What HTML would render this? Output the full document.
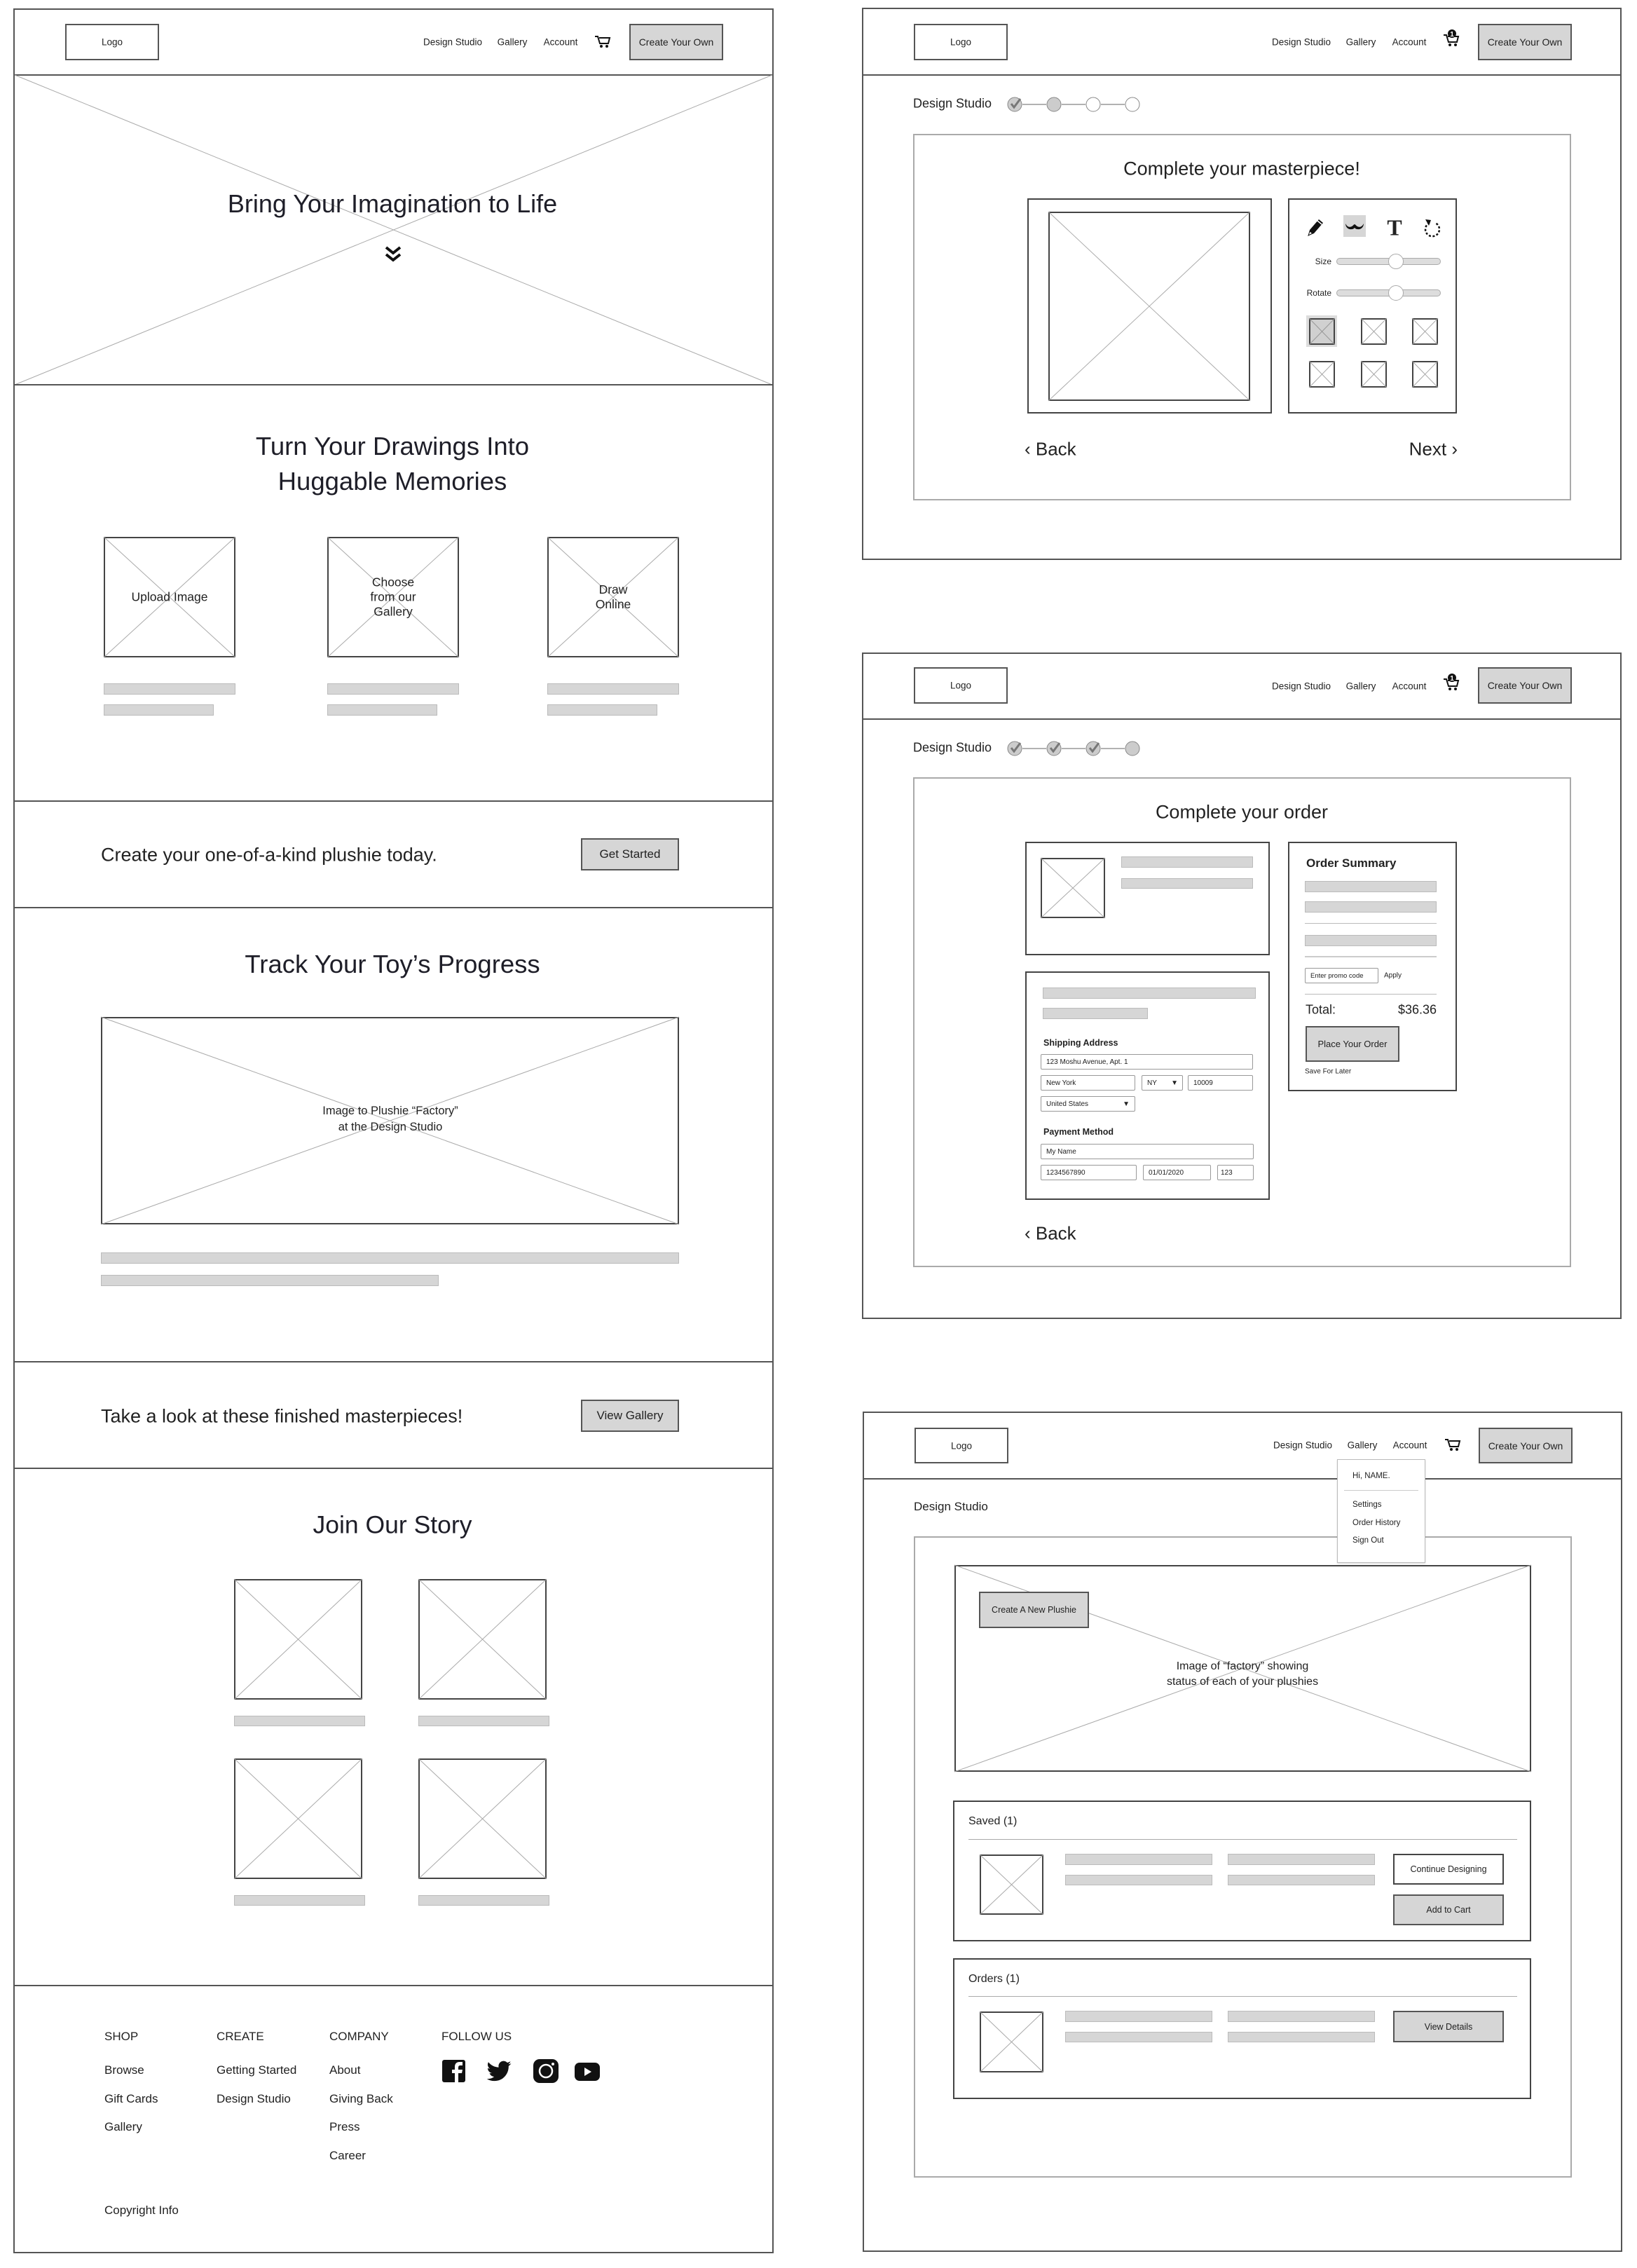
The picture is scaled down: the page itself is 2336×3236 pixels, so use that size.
<!DOCTYPE html>
<html><head><meta charset="utf-8">
<style>
*{margin:0;padding:0;box-sizing:border-box}
body{width:2336px;height:3236px;background:#fff;position:relative;overflow:hidden;font-family:"Liberation Sans",Arial,sans-serif;color:#222}
.a{position:absolute}
.fr{position:absolute;border:2px solid #555}
.hl{position:absolute;height:2px;background:#555}
.t{position:absolute;white-space:nowrap}
.c{transform:translate(-50%,-50%);text-align:center}
.l{transform:translateY(-50%)}
.r{transform:translate(-100%,-50%)}
.box{position:absolute;border:2px solid #444;background:#fff}
.bar{position:absolute;background:#d6d6d6;border:1px solid #bbb}
.btn{position:absolute;background:#d6d6d6;border:2px solid #555;display:flex;align-items:center;justify-content:center;white-space:nowrap}
.wbtn{position:absolute;background:#fff;border:2px solid #444;display:flex;align-items:center;justify-content:center;white-space:nowrap}
.inp{position:absolute;border:1px solid #999;border-radius:2px;font-size:10px;padding-left:7px;display:flex;align-items:center;background:#fff}
svg.x{position:absolute;overflow:visible}
.nav{font-size:13.5px}
</style></head><body>

<!-- ============ LEFT FRAME ============ -->
<div class="fr" style="left:19px;top:12px;width:1085px;height:3203px"></div>
<div class="hl" style="left:19px;top:106px;width:1085px"></div>
<div class="box" style="left:93px;top:34px;width:134px;height:52px;border-color:#555"></div>
<div class="t c" style="left:160px;top:60px;font-size:13.5px">Logo</div>
<div class="t c nav" style="left:646px;top:60px">Design Studio</div>
<div class="t c nav" style="left:731px;top:60px">Gallery</div>
<div class="t c nav" style="left:800px;top:60px">Account</div>
<svg class="a" style="left:848px;top:50px" width="24" height="20" viewBox="0 0 24 20"><path d="M1 2h4l3 10h12l2-8H7" fill="none" stroke="#111" stroke-width="2"/><circle cx="10" cy="16" r="2" fill="#111"/><circle cx="18" cy="16" r="2" fill="#111"/></svg>
<div class="btn" style="left:898px;top:34px;width:134px;height:52px;font-size:14px">Create Your Own</div>

<!-- hero -->
<svg class="x" style="left:21px;top:107px" width="1081" height="442"><line x1="0" y1="0" x2="1081" y2="442" stroke="#aaa" stroke-width="1"/><line x1="1081" y1="0" x2="0" y2="442" stroke="#aaa" stroke-width="1"/></svg>
<div class="t c" style="left:560px;top:291px;font-size:36px;color:#1e1e28">Bring Your Imagination to Life</div>
<svg class="a" style="left:548px;top:350px" width="26" height="26" viewBox="0 0 26 26"><path d="M3 3l10 8 10-8M3 13l10 8 10-8" fill="none" stroke="#111" stroke-width="4"/></svg>
<div class="hl" style="left:19px;top:548px;width:1085px"></div>

<!-- turn your drawings -->
<div class="t c" style="left:560px;top:662px;font-size:36.5px;line-height:50px;color:#1e1e28">Turn Your Drawings Into<br>Huggable Memories</div>
<svg class="x" style="left:148px;top:766px" width="188" height="172"><rect x="1" y="1" width="186" height="170" fill="#fff" stroke="#444" stroke-width="2"/><line x1="0" y1="0" x2="188" y2="172" stroke="#aaa"/><line x1="188" y1="0" x2="0" y2="172" stroke="#aaa"/></svg>
<svg class="x" style="left:467px;top:766px" width="188" height="172"><rect x="1" y="1" width="186" height="170" fill="#fff" stroke="#444" stroke-width="2"/><line x1="0" y1="0" x2="188" y2="172" stroke="#aaa"/><line x1="188" y1="0" x2="0" y2="172" stroke="#aaa"/></svg>
<svg class="x" style="left:781px;top:766px" width="188" height="172"><rect x="1" y="1" width="186" height="170" fill="#fff" stroke="#444" stroke-width="2"/><line x1="0" y1="0" x2="188" y2="172" stroke="#aaa"/><line x1="188" y1="0" x2="0" y2="172" stroke="#aaa"/></svg>
<div class="t c" style="left:242px;top:852px;font-size:17.5px">Upload Image</div>
<div class="t c" style="left:561px;top:852px;font-size:17.5px;line-height:21px">Choose<br>from our<br>Gallery</div>
<div class="t c" style="left:875px;top:852px;font-size:17.5px;line-height:21px">Draw<br>Online</div>
<div class="bar" style="left:148px;top:975px;width:188px;height:16px"></div>
<div class="bar" style="left:148px;top:1005px;width:157px;height:16px"></div>
<div class="bar" style="left:467px;top:975px;width:188px;height:16px"></div>
<div class="bar" style="left:467px;top:1005px;width:157px;height:16px"></div>
<div class="bar" style="left:781px;top:975px;width:188px;height:16px"></div>
<div class="bar" style="left:781px;top:1005px;width:157px;height:16px"></div>
<div class="hl" style="left:19px;top:1142px;width:1085px"></div>

<!-- CTA 1 -->
<div class="t l" style="left:144px;top:1220px;font-size:27px">Create your one-of-a-kind plushie today.</div>
<div class="btn" style="left:829px;top:1196px;width:140px;height:46px;font-size:17px">Get Started</div>
<div class="hl" style="left:19px;top:1294px;width:1085px"></div>

<!-- track -->
<div class="t c" style="left:560px;top:1376px;font-size:36.5px;color:#1e1e28">Track Your Toy’s Progress</div>
<svg class="x" style="left:144px;top:1451px" width="825" height="296"><rect x="1" y="1" width="823" height="294" fill="#fff" stroke="#444" stroke-width="2"/><line x1="0" y1="0" x2="825" y2="296" stroke="#aaa"/><line x1="825" y1="0" x2="0" y2="296" stroke="#aaa"/></svg>
<div class="t c" style="left:557px;top:1597px;font-size:16.5px;line-height:23px">Image to Plushie “Factory”<br>at the Design Studio</div>
<div class="bar" style="left:144px;top:1787px;width:825px;height:16px"></div>
<div class="bar" style="left:144px;top:1819px;width:482px;height:16px"></div>
<div class="hl" style="left:19px;top:1942px;width:1085px"></div>

<!-- CTA 2 -->
<div class="t l" style="left:144px;top:2021px;font-size:27px">Take a look at these finished masterpieces!</div>
<div class="btn" style="left:829px;top:1997px;width:140px;height:46px;font-size:17px">View Gallery</div>
<div class="hl" style="left:19px;top:2094px;width:1085px"></div>

<!-- join -->
<div class="t c" style="left:560px;top:2176px;font-size:35.5px;color:#1e1e28">Join Our Story</div>
<svg class="x" style="left:334px;top:2253px" width="183" height="172"><rect x="1" y="1" width="181" height="170" fill="#fff" stroke="#444" stroke-width="2"/><line x1="0" y1="0" x2="183" y2="172" stroke="#aaa"/><line x1="183" y1="0" x2="0" y2="172" stroke="#aaa"/></svg>
<svg class="x" style="left:597px;top:2253px" width="183" height="172"><rect x="1" y="1" width="181" height="170" fill="#fff" stroke="#444" stroke-width="2"/><line x1="0" y1="0" x2="183" y2="172" stroke="#aaa"/><line x1="183" y1="0" x2="0" y2="172" stroke="#aaa"/></svg>
<svg class="x" style="left:334px;top:2509px" width="183" height="172"><rect x="1" y="1" width="181" height="170" fill="#fff" stroke="#444" stroke-width="2"/><line x1="0" y1="0" x2="183" y2="172" stroke="#aaa"/><line x1="183" y1="0" x2="0" y2="172" stroke="#aaa"/></svg>
<svg class="x" style="left:597px;top:2509px" width="183" height="172"><rect x="1" y="1" width="181" height="170" fill="#fff" stroke="#444" stroke-width="2"/><line x1="0" y1="0" x2="183" y2="172" stroke="#aaa"/><line x1="183" y1="0" x2="0" y2="172" stroke="#aaa"/></svg>
<div class="bar" style="left:334px;top:2448px;width:187px;height:15px"></div>
<div class="bar" style="left:597px;top:2448px;width:187px;height:15px"></div>
<div class="bar" style="left:334px;top:2704px;width:187px;height:15px"></div>
<div class="bar" style="left:597px;top:2704px;width:187px;height:15px"></div>
<div class="hl" style="left:19px;top:2832px;width:1085px"></div>

<!-- footer -->
<div class="t l" style="left:149px;top:2906px;font-size:17px">SHOP</div>
<div class="t l" style="left:309px;top:2906px;font-size:17px">CREATE</div>
<div class="t l" style="left:470px;top:2906px;font-size:17px">COMPANY</div>
<div class="t l" style="left:630px;top:2906px;font-size:17px">FOLLOW US</div>
<div class="t l" style="left:149px;top:2954px;font-size:17px">Browse</div>
<div class="t l" style="left:149px;top:2995px;font-size:17px">Gift Cards</div>
<div class="t l" style="left:149px;top:3035px;font-size:17px">Gallery</div>
<div class="t l" style="left:309px;top:2954px;font-size:17px">Getting Started</div>
<div class="t l" style="left:309px;top:2995px;font-size:17px">Design Studio</div>
<div class="t l" style="left:470px;top:2954px;font-size:17px">About</div>
<div class="t l" style="left:470px;top:2995px;font-size:17px">Giving Back</div>
<div class="t l" style="left:470px;top:3035px;font-size:17px">Press</div>
<div class="t l" style="left:470px;top:3076px;font-size:17px">Career</div>
<div class="t l" style="left:149px;top:3154px;font-size:17px">Copyright Info</div>
<svg class="a" style="left:630px;top:2939px" width="36" height="32" viewBox="0 0 36 32"><rect x="1" y="0" width="33" height="32" rx="3" fill="#111"/><path d="M24 32V19h5l1-5h-6v-3c0-2 1-3 3-3h3V3h-4c-5 0-7 3-7 7v4h-4v5h4v13z" fill="#fff"/></svg>
<svg class="a" style="left:693px;top:2940px" width="38" height="32" viewBox="0 0 24 20"><path d="M23 2.5c-.8.4-1.7.6-2.6.7.9-.6 1.6-1.4 2-2.5-.9.5-1.900.9-2.9 1.1A4.5 4.5 0 0 0 11.8 6 12.8 12.8 0 0 1 2.5 1.3a4.5 4.5 0 0 0 1.4 6 4.4 4.4 0 0 1-2-.6v.1c0 2.2 1.5 4 3.6 4.4-.7.2-1.4.2-2 .1.6 1.8 2.200 3.1 4.2 3.1A9 9 0 0 1 1 16.3 12.8 12.8 0 0 0 7.9 18.3c8.3 0 12.8-6.9 12.8-12.800v-.6c.9-.6 1.6-1.4 2.3-2.4z" fill="#111"/></svg>
<svg class="a" style="left:761px;top:2938px" width="36" height="34" viewBox="0 0 36 34"><rect x="0" y="0" width="36" height="34" rx="9" fill="#111"/><circle cx="18" cy="17" r="9" fill="none" stroke="#fff" stroke-width="2.5"/><circle cx="28" cy="7" r="2" fill="#fff"/></svg>
<svg class="a" style="left:820px;top:2943px" width="36" height="26" viewBox="0 0 36 26"><rect x="0" y="0" width="36" height="26" rx="7" fill="#111"/><path d="M14 7v12l10-6z" fill="#fff"/></svg>

<!-- ============ RIGHT FRAME 1 ============ -->
<div class="fr" style="left:1230px;top:11px;width:1084px;height:788px"></div>
<div class="hl" style="left:1230px;top:106px;width:1084px"></div>
<div class="box" style="left:1304px;top:34px;width:134px;height:52px;border-color:#555"></div>
<div class="t c" style="left:1371px;top:60px;font-size:13.5px">Logo</div>
<div class="t c nav" style="left:1857px;top:60px">Design Studio</div>
<div class="t c nav" style="left:1942px;top:60px">Gallery</div>
<div class="t c nav" style="left:2011px;top:60px">Account</div>
<svg class="a" style="left:2059px;top:42px" width="24" height="26" viewBox="0 0 24 26"><path d="M1 8h4l3 10h12l2-8H7" fill="none" stroke="#111" stroke-width="2"/><circle cx="10" cy="22" r="2" fill="#111"/><circle cx="18" cy="22" r="2" fill="#111"/><circle cx="13" cy="6" r="6" fill="#111"/><text x="13" y="10" font-size="10" fill="#fff" text-anchor="middle" font-family="Liberation Sans" font-weight="bold">1</text></svg>
<div class="btn" style="left:2109px;top:34px;width:134px;height:52px;font-size:14px">Create Your Own</div>

<div class="t l" style="left:1303px;top:148px;font-size:18px">Design Studio</div>
<svg class="a" style="left:1436px;top:136px" width="195" height="26" viewBox="0 0 195 26">
<line x1="23" y1="13" x2="57" y2="13" stroke="#666"/><line x1="79" y1="13" x2="113" y2="13" stroke="#666"/><line x1="135" y1="13" x2="169" y2="13" stroke="#666"/>
<circle cx="12" cy="13" r="10" fill="#ccc" stroke="#888"/><path d="M7 12l4 5 9-12" fill="none" stroke="#777" stroke-width="3"/>
<circle cx="68" cy="13" r="10" fill="#ccc" stroke="#888"/>
<circle cx="124" cy="13" r="10" fill="#fff" stroke="#888"/>
<circle cx="180" cy="13" r="10" fill="#fff" stroke="#888"/></svg>

<div class="a" style="left:1303px;top:191px;width:939px;height:523px;border:2px solid #aaa"></div>
<div class="t c" style="left:1772px;top:241px;font-size:27px">Complete your masterpiece!</div>
<div class="box" style="left:1466px;top:283px;width:349px;height:307px"></div>
<svg class="x" style="left:1496px;top:302px" width="288" height="270"><rect x="1" y="1" width="286" height="268" fill="#fff" stroke="#444" stroke-width="2"/><line x1="0" y1="0" x2="288" y2="270" stroke="#aaa"/><line x1="288" y1="0" x2="0" y2="270" stroke="#aaa"/></svg>
<div class="box" style="left:1838px;top:283px;width:241px;height:307px"></div>
<svg class="a" style="left:1864px;top:309px" width="26" height="30" viewBox="0 0 26 30"><path d="M3 27l2-8L18 4l6 5L11 24z" fill="#111"/><path d="M3 27l2-6 4 3z" fill="#fff" stroke="#111"/><line x1="16" y1="6" x2="22" y2="11" stroke="#fff" stroke-width="1.5"/></svg>
<div class="a" style="left:1917px;top:307px;width:32px;height:31px;background:#d6d6d6"></div>
<svg class="a" style="left:1919px;top:315px" width="28" height="14" viewBox="0 0 28 14"><path d="M1 4c2 4 5 6 9 4 2-1 3-3 4-3s2 2 4 3c4 2 7 0 9-4 0 5-4 9-9 8-2 0-3-1-4-2-1 1-2 2-4 2-5 1-9-3-9-8z" fill="#111"/></svg>
<div class="t c" style="left:1990px;top:325px;font-size:32px;font-weight:bold;font-family:'Liberation Serif',serif">T</div>
<svg class="a" style="left:2030px;top:310px" width="28" height="30" viewBox="0 0 28 30"><path d="M10 8a10 10 0 1 0 8 0" fill="none" stroke="#111" stroke-width="2.5" stroke-dasharray="3 2.5"/><path d="M4 3l8 1-3 8z" fill="#111"/></svg>
<div class="t r" style="left:1900px;top:373px;font-size:12px">Size</div>
<div class="a" style="left:1907px;top:368px;width:149px;height:10px;border:1px solid #aaa;border-radius:5px;background:#ddd"></div>
<div class="a" style="left:1981px;top:362px;width:22px;height:22px;border:1px solid #aaa;border-radius:50%;background:#fff"></div>
<div class="t r" style="left:1900px;top:418px;font-size:12px">Rotate</div>
<div class="a" style="left:1907px;top:413px;width:149px;height:10px;border:1px solid #aaa;border-radius:5px;background:#ddd"></div>
<div class="a" style="left:1981px;top:407px;width:22px;height:22px;border:1px solid #aaa;border-radius:50%;background:#fff"></div>
<div class="a" style="left:1864px;top:450px;width:44px;height:45px;background:#ddd"></div>
<svg class="x" style="left:1868px;top:454px" width="37" height="38"><rect x="1" y="1" width="35" height="36" fill="#d0d0d0" stroke="#444" stroke-width="2"/><line x1="0" y1="0" x2="37" y2="38" stroke="#999"/><line x1="37" y1="0" x2="0" y2="38" stroke="#999"/></svg>
<svg class="x" style="left:1942px;top:454px" width="37" height="38"><rect x="1" y="1" width="35" height="36" fill="#fff" stroke="#444" stroke-width="2"/><line x1="0" y1="0" x2="37" y2="38" stroke="#aaa"/><line x1="37" y1="0" x2="0" y2="38" stroke="#aaa"/></svg>
<svg class="x" style="left:2015px;top:454px" width="37" height="38"><rect x="1" y="1" width="35" height="36" fill="#fff" stroke="#444" stroke-width="2"/><line x1="0" y1="0" x2="37" y2="38" stroke="#aaa"/><line x1="37" y1="0" x2="0" y2="38" stroke="#aaa"/></svg>
<svg class="x" style="left:1868px;top:515px" width="37" height="38"><rect x="1" y="1" width="35" height="36" fill="#fff" stroke="#444" stroke-width="2"/><line x1="0" y1="0" x2="37" y2="38" stroke="#aaa"/><line x1="37" y1="0" x2="0" y2="38" stroke="#aaa"/></svg>
<svg class="x" style="left:1942px;top:515px" width="37" height="38"><rect x="1" y="1" width="35" height="36" fill="#fff" stroke="#444" stroke-width="2"/><line x1="0" y1="0" x2="37" y2="38" stroke="#aaa"/><line x1="37" y1="0" x2="0" y2="38" stroke="#aaa"/></svg>
<svg class="x" style="left:2015px;top:515px" width="37" height="38"><rect x="1" y="1" width="35" height="36" fill="#fff" stroke="#444" stroke-width="2"/><line x1="0" y1="0" x2="37" y2="38" stroke="#aaa"/><line x1="37" y1="0" x2="0" y2="38" stroke="#aaa"/></svg>
<div class="t l" style="left:1462px;top:641px;font-size:26px">‹ Back</div>
<div class="t r" style="left:2080px;top:641px;font-size:26px">Next ›</div>

<!-- ============ RIGHT FRAME 2 ============ -->
<div class="fr" style="left:1230px;top:931px;width:1084px;height:951px"></div>
<div class="hl" style="left:1230px;top:1025px;width:1084px"></div>
<div class="box" style="left:1304px;top:952px;width:134px;height:52px;border-color:#555"></div>
<div class="t c" style="left:1371px;top:978px;font-size:13.5px">Logo</div>
<div class="t c nav" style="left:1857px;top:979px">Design Studio</div>
<div class="t c nav" style="left:1942px;top:979px">Gallery</div>
<div class="t c nav" style="left:2011px;top:979px">Account</div>
<svg class="a" style="left:2059px;top:961px" width="24" height="26" viewBox="0 0 24 26"><path d="M1 8h4l3 10h12l2-8H7" fill="none" stroke="#111" stroke-width="2"/><circle cx="10" cy="22" r="2" fill="#111"/><circle cx="18" cy="22" r="2" fill="#111"/><circle cx="13" cy="6" r="6" fill="#111"/><text x="13" y="10" font-size="10" fill="#fff" text-anchor="middle" font-family="Liberation Sans" font-weight="bold">1</text></svg>
<div class="btn" style="left:2109px;top:952px;width:134px;height:52px;font-size:14px">Create Your Own</div>

<div class="t l" style="left:1303px;top:1067px;font-size:18px">Design Studio</div>
<svg class="a" style="left:1436px;top:1055px" width="195" height="26" viewBox="0 0 195 26">
<line x1="23" y1="13" x2="57" y2="13" stroke="#666"/><line x1="79" y1="13" x2="113" y2="13" stroke="#666"/><line x1="135" y1="13" x2="169" y2="13" stroke="#666"/>
<circle cx="12" cy="13" r="10" fill="#ccc" stroke="#888"/><path d="M7 12l4 5 9-12" fill="none" stroke="#777" stroke-width="3"/>
<circle cx="68" cy="13" r="10" fill="#ccc" stroke="#888"/><path d="M63 12l4 5 9-12" fill="none" stroke="#777" stroke-width="3"/>
<circle cx="124" cy="13" r="10" fill="#ccc" stroke="#888"/><path d="M119 12l4 5 9-12" fill="none" stroke="#777" stroke-width="3"/>
<circle cx="180" cy="13" r="10" fill="#ccc" stroke="#888"/></svg>

<div class="a" style="left:1303px;top:1109px;width:939px;height:699px;border:2px solid #aaa"></div>
<div class="t c" style="left:1772px;top:1159px;font-size:27px">Complete your order</div>
<div class="box" style="left:1463px;top:1201px;width:349px;height:162px"></div>
<svg class="x" style="left:1485px;top:1224px" width="92" height="86"><rect x="1" y="1" width="90" height="84" fill="#fff" stroke="#444" stroke-width="2"/><line x1="0" y1="0" x2="92" y2="86" stroke="#aaa"/><line x1="92" y1="0" x2="0" y2="86" stroke="#aaa"/></svg>
<div class="bar" style="left:1600px;top:1222px;width:188px;height:16px"></div>
<div class="bar" style="left:1600px;top:1253px;width:188px;height:15px"></div>

<div class="box" style="left:1463px;top:1386px;width:349px;height:326px"></div>
<div class="bar" style="left:1488px;top:1409px;width:304px;height:16px"></div>
<div class="bar" style="left:1488px;top:1438px;width:150px;height:16px"></div>
<div class="t l" style="left:1489px;top:1488px;font-size:12.5px;font-weight:bold">Shipping Address</div>
<div class="inp" style="left:1485px;top:1504px;width:303px;height:22px">123 Moshu Avenue, Apt. 1</div>
<div class="inp" style="left:1485px;top:1534px;width:135px;height:22px">New York</div>
<div class="inp" style="left:1629px;top:1534px;width:59px;height:22px">NY<span style="margin-left:auto;margin-right:6px">▼</span></div>
<div class="inp" style="left:1695px;top:1534px;width:93px;height:22px">10009</div>
<div class="inp" style="left:1485px;top:1564px;width:135px;height:22px">United States<span style="margin-left:auto;margin-right:7px">▼</span></div>
<div class="t l" style="left:1489px;top:1615px;font-size:12.5px;font-weight:bold">Payment Method</div>
<div class="inp" style="left:1485px;top:1632px;width:304px;height:22px">My Name</div>
<div class="inp" style="left:1485px;top:1662px;width:137px;height:22px">1234567890</div>
<div class="inp" style="left:1631px;top:1662px;width:97px;height:22px">01/01/2020</div>
<div class="inp" style="left:1737px;top:1662px;width:52px;height:22px;padding-left:4px">123</div>

<div class="box" style="left:1838px;top:1201px;width:241px;height:356px"></div>
<div class="t l" style="left:1864px;top:1232px;font-size:17px;font-weight:bold">Order Summary</div>
<div class="bar" style="left:1862px;top:1257px;width:188px;height:16px"></div>
<div class="bar" style="left:1862px;top:1286px;width:188px;height:16px"></div>
<div class="a" style="left:1862px;top:1317px;width:188px;height:1px;background:#bbb"></div>
<div class="bar" style="left:1862px;top:1334px;width:188px;height:16px"></div>
<div class="a" style="left:1862px;top:1364px;width:188px;height:2px;background:#ccc"></div>
<div class="inp" style="left:1862px;top:1381px;width:105px;height:22px;font-size:9.5px">Enter promo code</div>
<div class="t l" style="left:1975px;top:1392px;font-size:10px">Apply</div>
<div class="a" style="left:1862px;top:1418px;width:188px;height:1px;background:#bbb"></div>
<div class="t l" style="left:1863px;top:1441px;font-size:18px">Total:</div>
<div class="t r" style="left:2050px;top:1441px;font-size:18px">$36.36</div>
<div class="btn" style="left:1863px;top:1464px;width:134px;height:51px;font-size:13px">Place Your Order</div>
<div class="t l" style="left:1862px;top:1529px;font-size:10px">Save For Later</div>
<div class="t l" style="left:1462px;top:1760px;font-size:26px">‹ Back</div>

<!-- ============ RIGHT FRAME 3 ============ -->
<div class="fr" style="left:1231px;top:2014px;width:1084px;height:1199px"></div>
<div class="hl" style="left:1231px;top:2109px;width:1084px"></div>
<div class="box" style="left:1305px;top:2037px;width:134px;height:51px;border-color:#555"></div>
<div class="t c" style="left:1372px;top:2063px;font-size:13.5px">Logo</div>
<div class="t c nav" style="left:1859px;top:2062px">Design Studio</div>
<div class="t c nav" style="left:1944px;top:2062px">Gallery</div>
<div class="t c nav" style="left:2012px;top:2062px">Account</div>
<svg class="a" style="left:2061px;top:2052px" width="24" height="20" viewBox="0 0 24 20"><path d="M1 2h4l3 10h12l2-8H7" fill="none" stroke="#111" stroke-width="2"/><circle cx="10" cy="16" r="2" fill="#111"/><circle cx="18" cy="16" r="2" fill="#111"/></svg>
<div class="btn" style="left:2110px;top:2037px;width:134px;height:51px;font-size:14px">Create Your Own</div>

<div class="t l" style="left:1304px;top:2150px;font-size:17px">Design Studio</div>
<div class="a" style="left:1304px;top:2192px;width:939px;height:915px;border:2px solid #aaa"></div>

<svg class="x" style="left:1362px;top:2233px" width="823" height="295"><rect x="1" y="1" width="821" height="293" fill="#fff" stroke="#444" stroke-width="2"/><line x1="0" y1="0" x2="823" y2="295" stroke="#aaa"/><line x1="823" y1="0" x2="0" y2="295" stroke="#aaa"/></svg>
<div class="btn" style="left:1397px;top:2271px;width:157px;height:52px;font-size:12.5px">Create A New Plushie</div>
<div class="t c" style="left:1773px;top:2389px;font-size:16px;line-height:22px">Image of “factory” showing<br>status of each of your plushies</div>

<div class="box" style="left:1360px;top:2569px;width:825px;height:201px"></div>
<div class="t l" style="left:1382px;top:2599px;font-size:16px">Saved (1)</div>
<div class="a" style="left:1382px;top:2624px;width:783px;height:1px;background:#aaa"></div>
<svg class="x" style="left:1398px;top:2646px" width="91" height="86"><rect x="1" y="1" width="89" height="84" fill="#fff" stroke="#444" stroke-width="2"/><line x1="0" y1="0" x2="91" y2="86" stroke="#aaa"/><line x1="91" y1="0" x2="0" y2="86" stroke="#aaa"/></svg>
<div class="bar" style="left:1520px;top:2645px;width:210px;height:16px"></div>
<div class="bar" style="left:1752px;top:2645px;width:210px;height:16px"></div>
<div class="bar" style="left:1520px;top:2675px;width:210px;height:15px"></div>
<div class="bar" style="left:1752px;top:2675px;width:210px;height:15px"></div>
<div class="wbtn" style="left:1988px;top:2645px;width:158px;height:44px;font-size:12.5px">Continue Designing</div>
<div class="btn" style="left:1988px;top:2703px;width:158px;height:44px;font-size:12.5px">Add to Cart</div>

<div class="box" style="left:1360px;top:2794px;width:825px;height:201px"></div>
<div class="t l" style="left:1382px;top:2824px;font-size:16px">Orders (1)</div>
<div class="a" style="left:1382px;top:2848px;width:783px;height:1px;background:#aaa"></div>
<svg class="x" style="left:1398px;top:2870px" width="91" height="87"><rect x="1" y="1" width="89" height="85" fill="#fff" stroke="#444" stroke-width="2"/><line x1="0" y1="0" x2="91" y2="87" stroke="#aaa"/><line x1="91" y1="0" x2="0" y2="87" stroke="#aaa"/></svg>
<div class="bar" style="left:1520px;top:2869px;width:210px;height:16px"></div>
<div class="bar" style="left:1752px;top:2869px;width:210px;height:16px"></div>
<div class="bar" style="left:1520px;top:2899px;width:210px;height:15px"></div>
<div class="bar" style="left:1752px;top:2899px;width:210px;height:15px"></div>
<div class="btn" style="left:1988px;top:2869px;width:158px;height:45px;font-size:12.5px">View Details</div>

<!-- dropdown -->
<div class="a" style="left:1908px;top:2082px;width:126px;height:148px;background:#fff;border:1px solid #bbb;box-shadow:0 1px 2px rgba(0,0,0,.15)"></div>
<div class="t l" style="left:1930px;top:2106px;font-size:11.5px">Hi, NAME.</div>
<div class="a" style="left:1918px;top:2126px;width:106px;height:1px;background:#ccc"></div>
<div class="t l" style="left:1930px;top:2147px;font-size:11.5px">Settings</div>
<div class="t l" style="left:1930px;top:2173px;font-size:11.5px">Order History</div>
<div class="t l" style="left:1930px;top:2198px;font-size:11.5px">Sign Out</div>

</body></html>
